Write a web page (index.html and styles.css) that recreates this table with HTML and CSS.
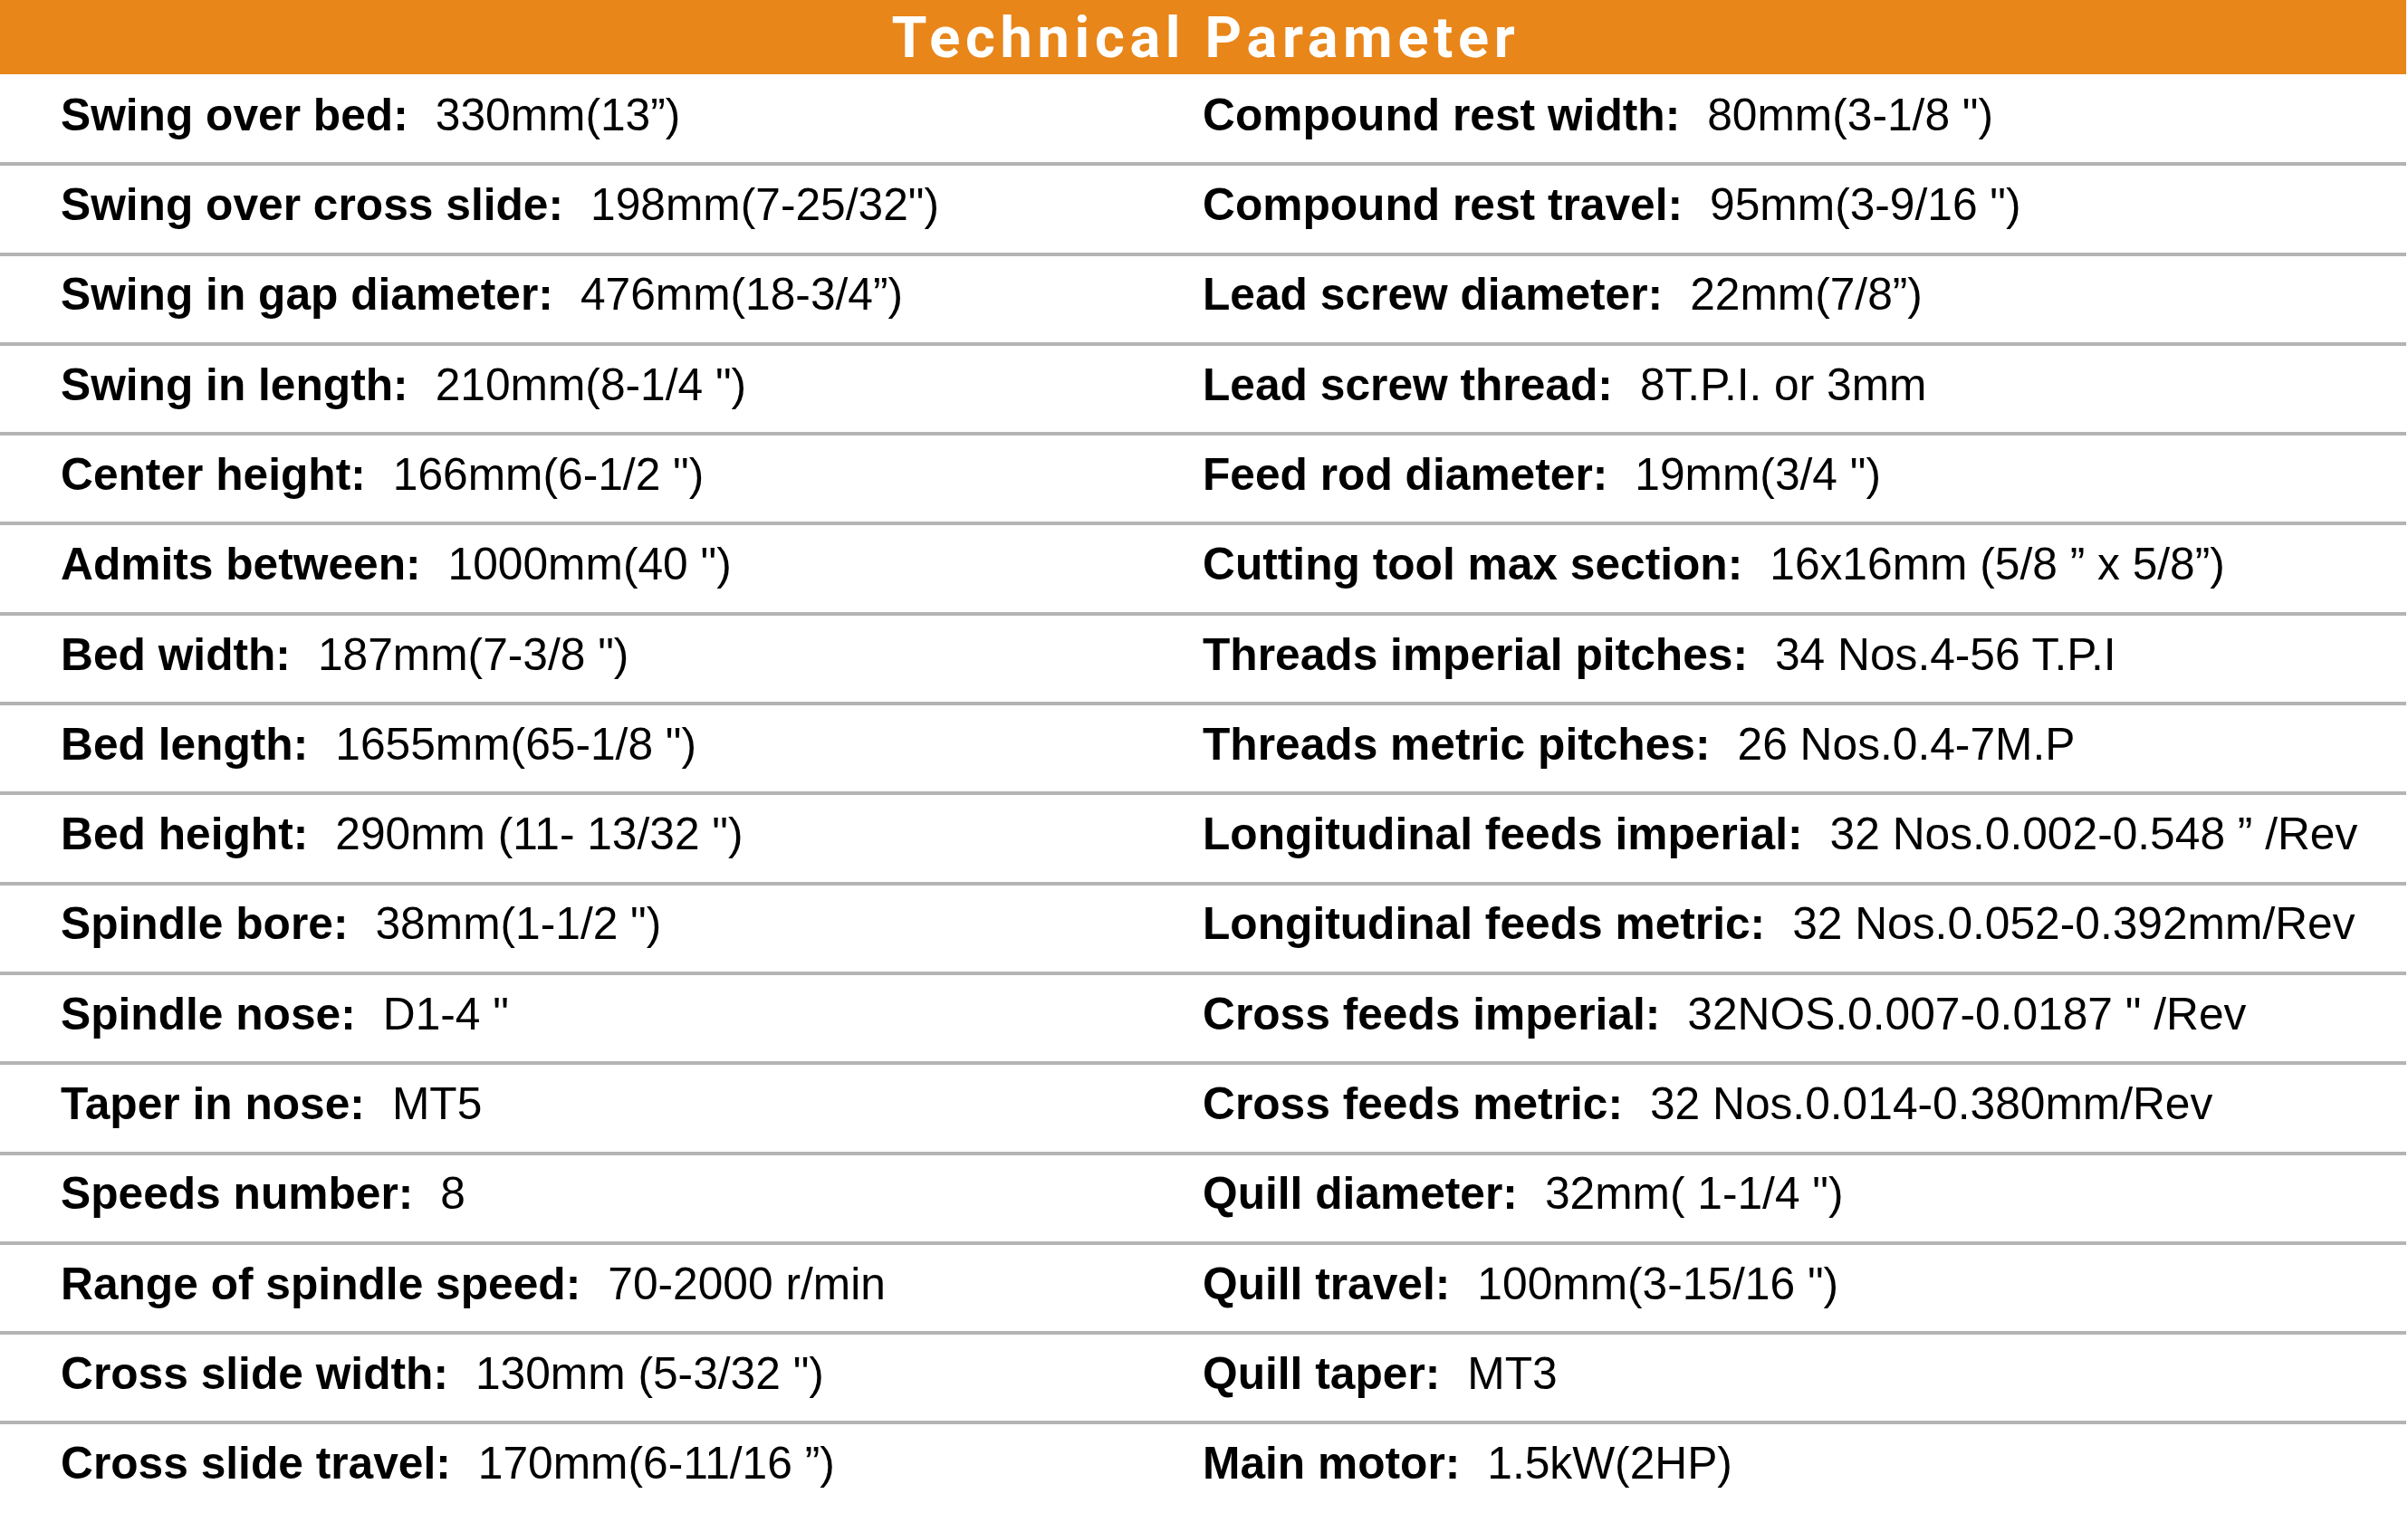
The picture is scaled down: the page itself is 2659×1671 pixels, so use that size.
FILE: index.html
```html
<!DOCTYPE html>
<html lang="en">
<head>
<meta charset="utf-8">
<title>Technical Parameter</title>
<link rel="stylesheet" href="styles.css">
</head>
<body>
<div class="sheet">
  <header class="banner"><h1 class="banner-title">Technical Parameter</h1></header>
  <div class="table">
    <div class="row"><div class="cell left"><b>Swing over bed:</b><span class="val">330mm(13”)</span></div><div class="cell right"><b>Compound rest width:</b><span class="val">80mm(3-1/8 ")</span></div></div>
    <div class="row"><div class="cell left"><b>Swing over cross slide:</b><span class="val">198mm(7-25/32")</span></div><div class="cell right"><b>Compound rest travel:</b><span class="val">95mm(3-9/16 ")</span></div></div>
    <div class="row"><div class="cell left"><b>Swing in gap diameter:</b><span class="val">476mm(18-3/4”)</span></div><div class="cell right"><b>Lead screw diameter:</b><span class="val">22mm(7/8”)</span></div></div>
    <div class="row"><div class="cell left"><b>Swing in length:</b><span class="val">210mm(8-1/4 ")</span></div><div class="cell right"><b>Lead screw thread:</b><span class="val">8T.P.I. or 3mm</span></div></div>
    <div class="row"><div class="cell left"><b>Center height:</b><span class="val">166mm(6-1/2 ")</span></div><div class="cell right"><b>Feed rod diameter:</b><span class="val">19mm(3/4 ")</span></div></div>
    <div class="row"><div class="cell left"><b>Admits between:</b><span class="val">1000mm(40 ")</span></div><div class="cell right"><b>Cutting tool max section:</b><span class="val">16x16mm (5/8 ” x 5/8”)</span></div></div>
    <div class="row"><div class="cell left"><b>Bed width:</b><span class="val">187mm(7-3/8 ")</span></div><div class="cell right"><b>Threads imperial pitches:</b><span class="val">34 Nos.4-56 T.P.I</span></div></div>
    <div class="row"><div class="cell left"><b>Bed length:</b><span class="val">1655mm(65-1/8 ")</span></div><div class="cell right"><b>Threads metric pitches:</b><span class="val">26 Nos.0.4-7M.P</span></div></div>
    <div class="row"><div class="cell left"><b>Bed height:</b><span class="val">290mm (11- 13/32 ")</span></div><div class="cell right"><b>Longitudinal feeds imperial:</b><span class="val">32 Nos.0.002-0.548 ” /Rev</span></div></div>
    <div class="row"><div class="cell left"><b>Spindle bore:</b><span class="val">38mm(1-1/2 ")</span></div><div class="cell right"><b>Longitudinal feeds metric:</b><span class="val">32 Nos.0.052-0.392mm/Rev</span></div></div>
    <div class="row"><div class="cell left"><b>Spindle nose:</b><span class="val">D1-4 "</span></div><div class="cell right"><b>Cross feeds imperial:</b><span class="val">32NOS.0.007-0.0187 " /Rev</span></div></div>
    <div class="row"><div class="cell left"><b>Taper in nose:</b><span class="val">MT5</span></div><div class="cell right"><b>Cross feeds metric:</b><span class="val">32 Nos.0.014-0.380mm/Rev</span></div></div>
    <div class="row"><div class="cell left"><b>Speeds number:</b><span class="val">8</span></div><div class="cell right"><b>Quill diameter:</b><span class="val">32mm( 1-1/4 ")</span></div></div>
    <div class="row"><div class="cell left"><b>Range of spindle speed:</b><span class="val">70-2000 r/min</span></div><div class="cell right"><b>Quill travel:</b><span class="val">100mm(3-15/16 ")</span></div></div>
    <div class="row"><div class="cell left"><b>Cross slide width:</b><span class="val">130mm (5-3/32 ")</span></div><div class="cell right"><b>Quill taper:</b><span class="val">MT3</span></div></div>
    <div class="row"><div class="cell left"><b>Cross slide travel:</b><span class="val">170mm(6-11/16 ”)</span></div><div class="cell right"><b>Main motor:</b><span class="val">1.5kW(2HP)</span></div></div>
  </div>
</div>
</body>
</html>
```
FILE: styles.css
```css
html, body {
  margin: 0;
  padding: 0;
  background: #ffffff;
}
.sheet {
  width: 2657px;
  font-family: "Liberation Sans", Arial, sans-serif;
  color: #000;
}
.banner {
  height: 82px;
  background: #e8861a;
  display: flex;
  align-items: center;
  justify-content: center;
}
.banner-title {
  margin: 0;
  font-family: Roboto, "Liberation Sans", sans-serif;
  font-weight: 700;
  font-size: 63px;
  letter-spacing: 5.7px;
  color: #ffffff;
  line-height: 1;
  padding-left: 6px;
}
.table {
  display: flex;
  flex-direction: column;
  padding-top: 2px;
}
.row {
  box-sizing: border-box;
  height: 99.3px;
  display: grid;
  grid-template-columns: 1328px 1fr;
  align-items: center;
  border-bottom: 4px solid #b4b4b4;
  padding-bottom: 8px;
}
.row:last-child {
  border-bottom: none;
  padding-bottom: 12px;
}
.cell {
  font-size: 49.7px;
  line-height: 1;
  white-space: nowrap;
}
.cell.left {
  padding-left: 67px;
}
.cell b {
  font-weight: 700;
}
.val {
  margin-left: 30px;
  font-weight: 400;
}
```
